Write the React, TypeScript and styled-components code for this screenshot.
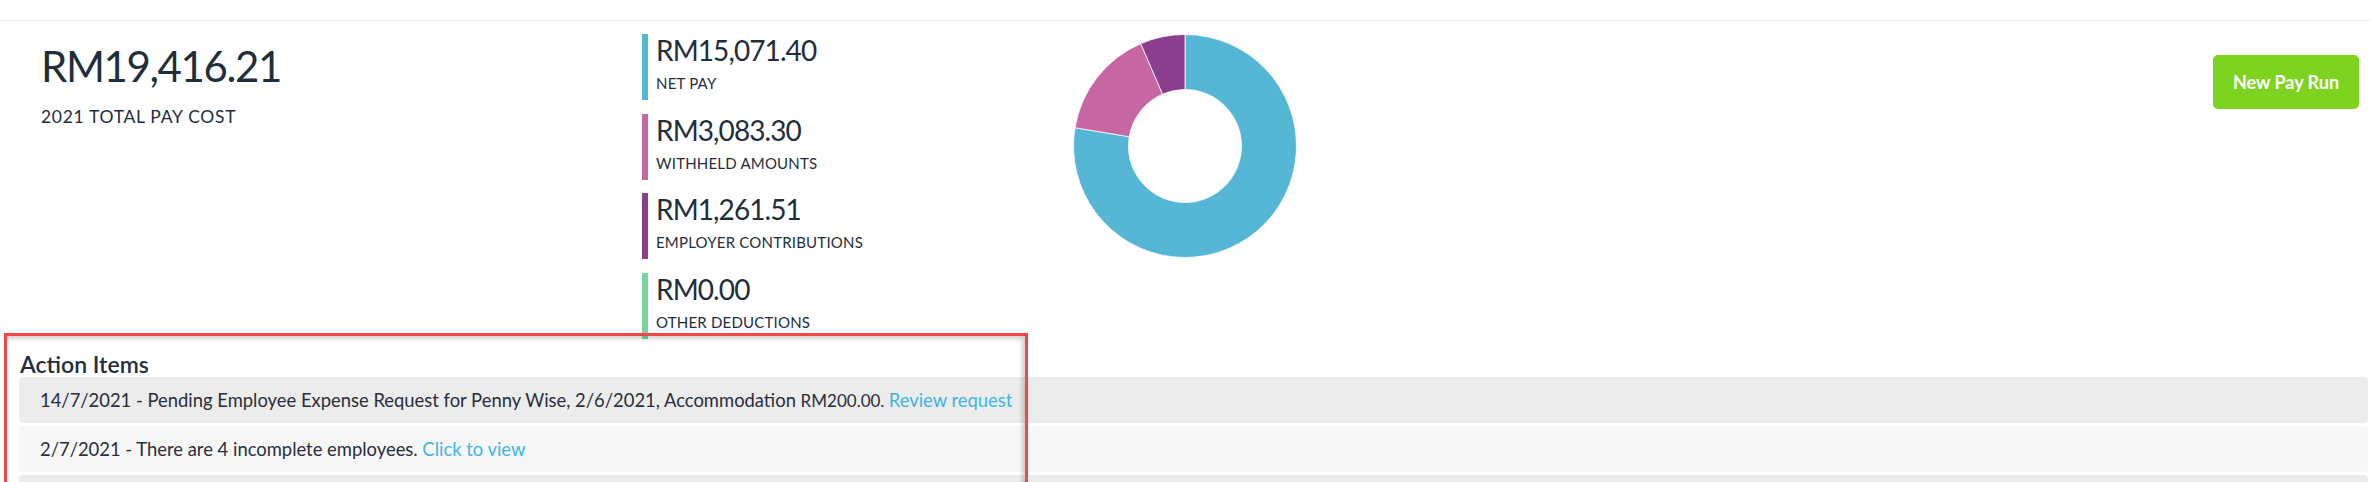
import styled, { createGlobalStyle } from 'styled-components';

type Slice = {
  label: string;
  amount: number;
  color: string;
};

type ActionItem = {
  date: string;
  text: string;
  amount?: string;
  link?: string;
};

const slices: Slice[] = [
  { label: 'NET PAY', amount: 15071.4, color: '#55b7d5' },
  { label: 'WITHHELD AMOUNTS', amount: 3083.3, color: '#c667a3' },
  { label: 'EMPLOYER CONTRIBUTIONS', amount: 1261.51, color: '#893f8d' },
  { label: 'OTHER DEDUCTIONS', amount: 0, color: '#7bd49b' },
];

const actionItems: ActionItem[] = [
  {
    date: '14/7/2021',
    text: 'Pending Employee Expense Request for Penny Wise, 2/6/2021, Accommodation',
    amount: 'RM200.00.',
    link: 'Review request',
  },
  {
    date: '2/7/2021',
    text: 'There are 4 incomplete employees.',
    link: 'Click to view',
  },
  { date: '', text: '' },
];

const formatMoney = (value: number) =>
  'RM' +
  value.toLocaleString('en-US', {
    minimumFractionDigits: 2,
    maximumFractionDigits: 2,
  });

const GlobalStyle = createGlobalStyle`
  html, body {
    margin: 0;
    overflow: hidden;
    background: #fff;
  }

  body {
    color: #1e2e3c;
    font-family: Lato, "Liberation Sans", sans-serif;
  }
`;

const Page = styled.div`
  position: relative;
  height: 482px;
  overflow: hidden;
`;

const TopRule = styled.div`
  border-bottom: 1px solid #ededed;
  height: 20px;
`;

const Summary = styled.section`
  align-items: flex-start;
  display: flex;
  padding: 13px 12px 0 41px;
`;

const Total = styled.div`
  padding-top: 6px;
  width: 601px;
`;

const TotalAmount = styled.div`
  font-size: 42px;
  letter-spacing: -1.4px;
  line-height: 52px;
`;

const TotalLabel = styled.div`
  font-size: 17.5px;
  letter-spacing: 0.7px;
  line-height: 20px;
  margin-top: 15px;
`;

const Breakdown = styled.ul`
  display: flex;
  flex-direction: column;
  gap: 13.5px;
  list-style: none;
  margin: 0;
  padding: 0;
  width: 431px;
`;

const BreakdownItem = styled.li<{ $color: string }>`
  border-left: 6px solid ${({ $color }) => $color};
  height: 66px;
  padding-left: 8px;
`;

const ItemAmount = styled.div`
  font-size: 28px;
  letter-spacing: -0.9px;
  line-height: 32px;
`;

const ItemLabel = styled.div`
  font-size: 15px;
  letter-spacing: 0.2px;
  line-height: 18px;
  margin-top: 8px;
`;

const Chart = styled.svg`
  display: block;
  flex: none;
  height: 224px;
  width: 224px;
`;

const NewPayRunButton = styled.button`
  background: #7ed321;
  border: 0;
  border-radius: 5px;
  color: #fff;
  cursor: pointer;
  font-family: Lato, "Liberation Sans", sans-serif;
  font-size: 18px;
  font-weight: 700;
  height: 54px;
  margin-left: auto;
  margin-top: 21px;
  padding: 0;
  width: 146px;
`;

const Actions = styled.section`
  padding: 12px 3px 0 19px;
`;

const ActionsHeading = styled.h2`
  font-size: 23px;
  font-weight: 600;
  line-height: 26px;
  margin: 0 0 0 1px;
`;

const ActionList = styled.ul`
  display: flex;
  flex-direction: column;
  gap: 3px;
  list-style: none;
  margin: 0;
  padding: 0;
`;

const ActionRow = styled.li<{ $shade: boolean }>`
  background: ${({ $shade }) => ($shade ? '#ececec' : '#f7f7f7')};
  border-radius: 4px;
  color: #2a2d3c;
  font-size: 18.4px;
  height: 46px;
  line-height: 46px;
  padding-left: 21px;
  white-space: nowrap;
`;

const Money = styled.span`
  font-size: 17px;
`;

const ActionLink = styled.a`
  color: #3db6e6;
  cursor: pointer;
  text-decoration: none;
`;

const Highlight = styled.div`
  border: 3px solid #f04747;
  box-shadow: inset -3px 3px 4px rgba(0, 0, 0, 0.18);
  height: 149px;
  left: 4px;
  pointer-events: none;
  position: absolute;
  top: 333px;
  width: 1018px;
`;

function arcPath(start: number, end: number, outer: number, inner: number) {
  const c = 112;
  const point = (angle: number, radius: number) => {
    const rad = ((angle - 90) * Math.PI) / 180;
    return `${c + radius * Math.cos(rad)} ${c + radius * Math.sin(rad)}`;
  };
  const large = end - start > 180 ? 1 : 0;
  return [
    `M ${point(start, outer)}`,
    `A ${outer} ${outer} 0 ${large} 1 ${point(end, outer)}`,
    `L ${point(end, inner)}`,
    `A ${inner} ${inner} 0 ${large} 0 ${point(start, inner)}`,
    'Z',
  ].join(' ');
}

function Donut({ data }: { data: Slice[] }) {
  const total = data.reduce((sum, s) => sum + s.amount, 0);
  let angle = 0;

  return (
    <Chart viewBox="0 0 224 224">
      {data
        .filter((s) => s.amount > 0)
        .map((s) => {
          const start = angle;
          angle += (s.amount / total) * 360;
          return (
            <path
              key={s.label}
              d={arcPath(start, angle, 111.5, 56.5)}
              fill={s.color}
              stroke="#fff"
              strokeWidth={0.8}
            />
          );
        })}
    </Chart>
  );
}

export default function App() {
  const total = slices.reduce((sum, s) => sum + s.amount, 0);

  return (
    <Page>
      <GlobalStyle />
      <TopRule />
      <Summary>
        <Total>
          <TotalAmount>{formatMoney(total)}</TotalAmount>
          <TotalLabel>2021 TOTAL PAY COST</TotalLabel>
        </Total>
        <Breakdown>
          {slices.map((s) => (
            <BreakdownItem key={s.label} $color={s.color}>
              <ItemAmount>{formatMoney(s.amount)}</ItemAmount>
              <ItemLabel>{s.label}</ItemLabel>
            </BreakdownItem>
          ))}
        </Breakdown>
        <Donut data={slices} />
        <NewPayRunButton>New Pay Run</NewPayRunButton>
      </Summary>
      <Actions>
        <ActionsHeading>Action Items</ActionsHeading>
        <ActionList>
          {actionItems.map((item, i) => (
            <ActionRow key={i} $shade={i % 2 === 0}>
              {item.date ? `${item.date} - ${item.text} ` : '\u00a0'}
              {item.amount && <Money>{item.amount} </Money>}
              {item.link && <ActionLink>{item.link}</ActionLink>}
            </ActionRow>
          ))}
        </ActionList>
      </Actions>
      <Highlight />
    </Page>
  );
}
